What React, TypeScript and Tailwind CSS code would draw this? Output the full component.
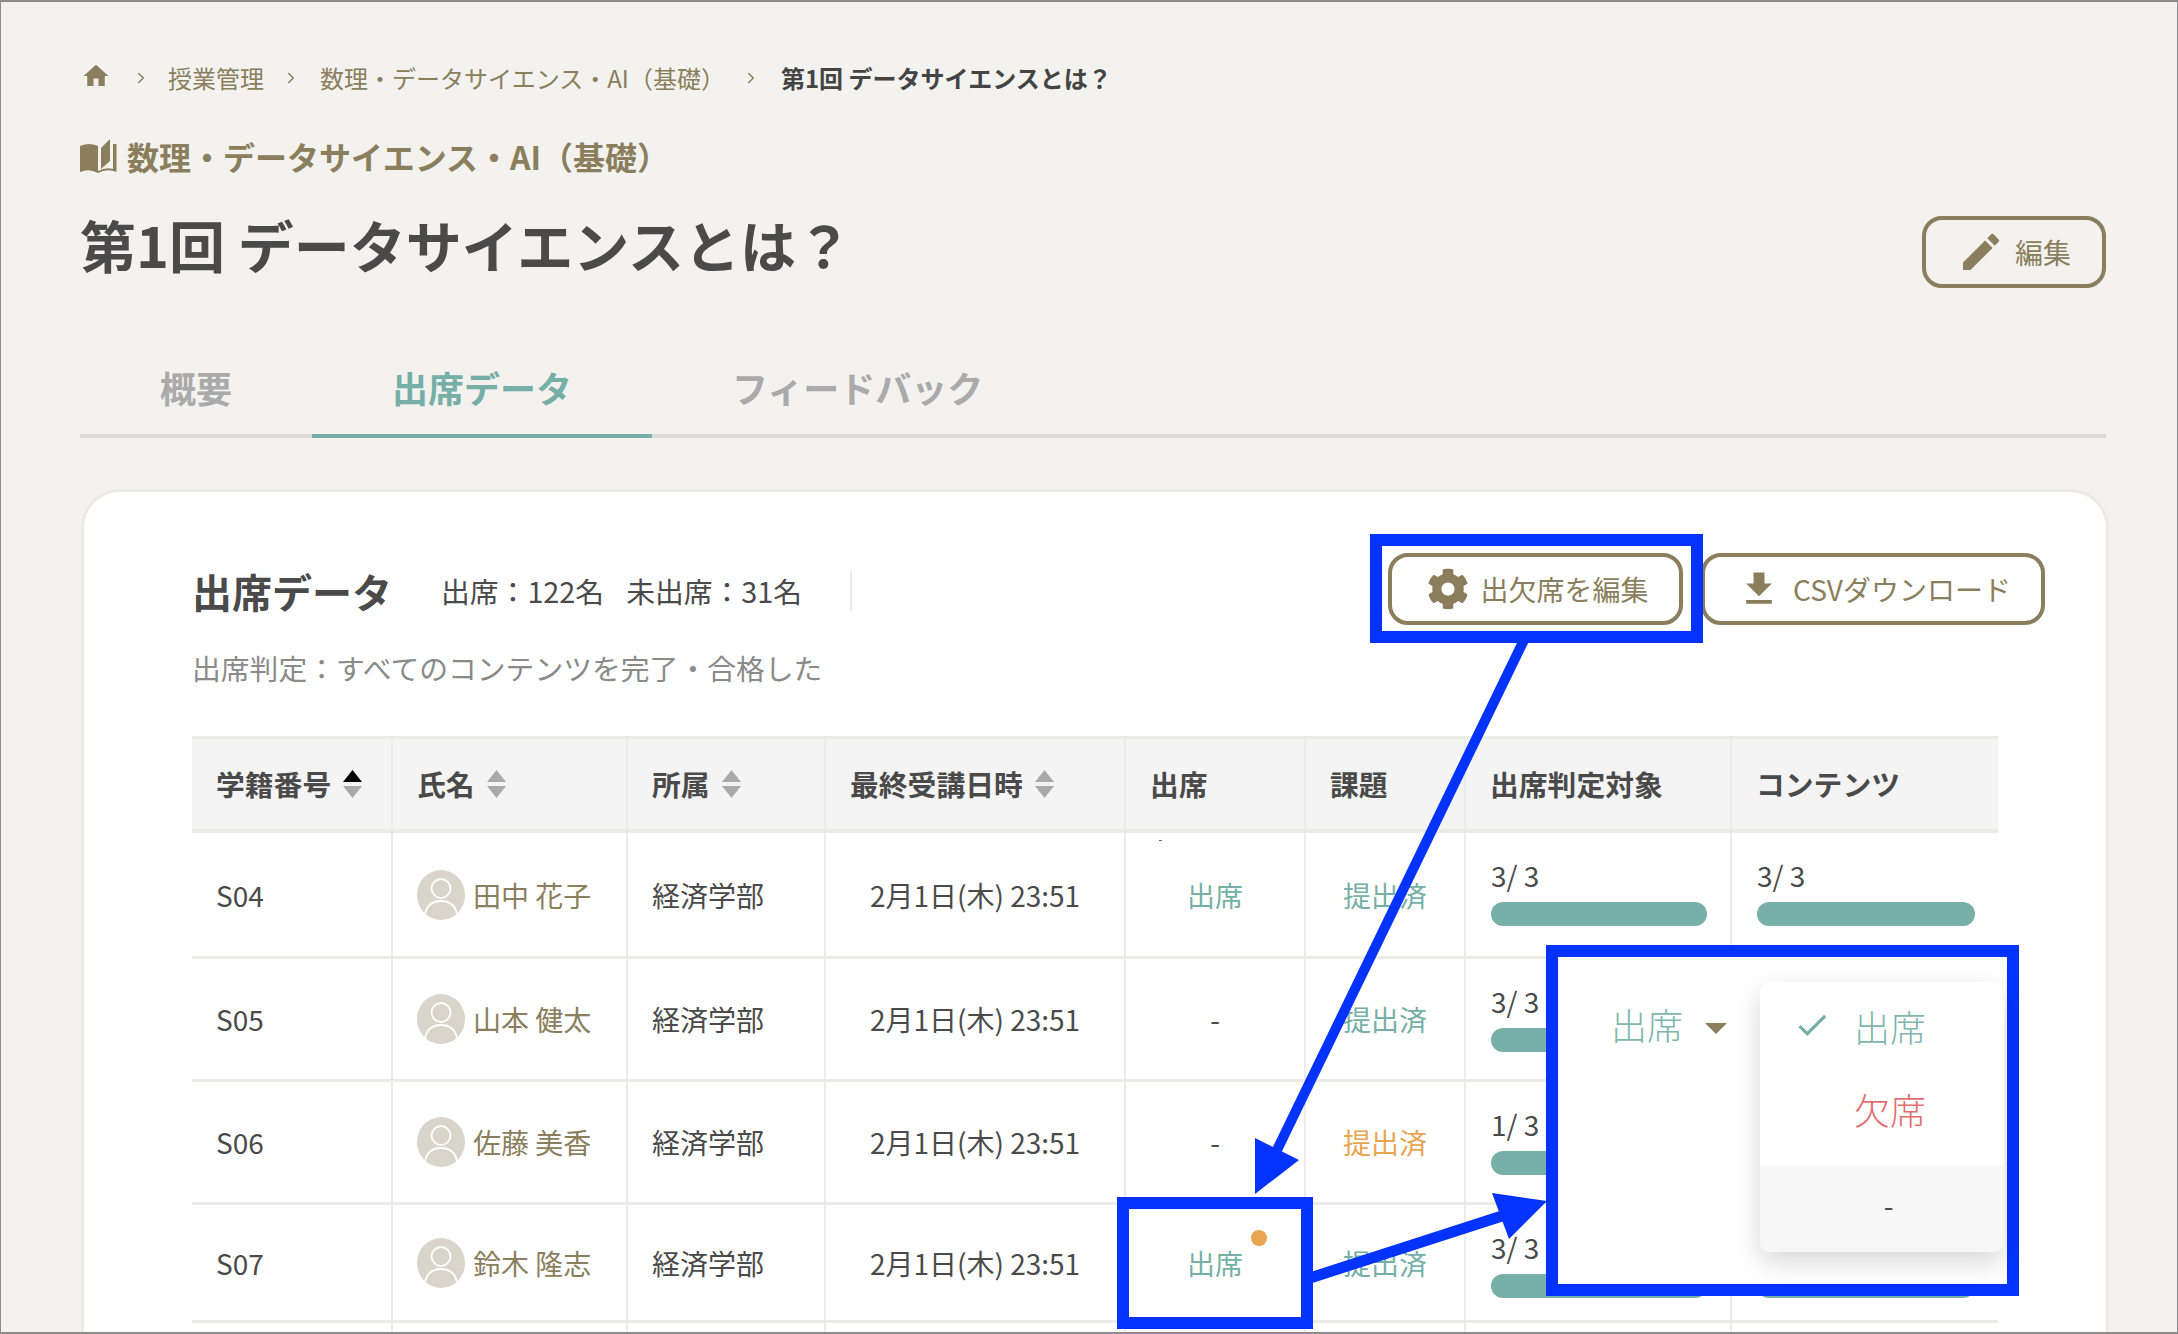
import { MdHome, MdEdit, MdFileDownload, MdCheck } from 'react-icons/md'
import { FaCog } from 'react-icons/fa'
import { LuChevronRight } from 'react-icons/lu'

const rows = [
  { id: 'S04', name: '田中 花子', attend: '出席', submit: 'text-[#76afa8]', target: '3/ 3', content: '3/ 3', h: 'h-[126px]' },
  { id: 'S05', name: '山本 健太', attend: '-', submit: 'text-[#76afa8]', target: '3/ 3', content: '3/ 3', h: 'h-[123px]' },
  { id: 'S06', name: '佐藤 美香', attend: '-', submit: 'text-[#e8a552]', target: '1/ 3', content: '3/ 3', h: 'h-[123px]' },
  { id: 'S07', name: '鈴木 隆志', attend: '出席', submit: 'text-[#76afa8]', target: '3/ 3', content: '3/ 3', h: 'h-[118px]', dot: true },
]

function SortIcon({ active }: { active?: boolean }) {
  return (
    <svg width="19" height="28" viewBox="0 0 19 28" className="shrink-0">
      <polygon points="9.5,0 19,12 0,12" fill={active ? '#000' : '#aaa'} />
      <polygon points="0,16 19,16 9.5,28" fill="#aaa" />
    </svg>
  )
}

function Avatar() {
  return (
    <svg width="48" height="50" viewBox="0 0 48 50" className="shrink-0">
      <ellipse cx="24" cy="25" rx="24" ry="25" fill="#d9d5ca" />
      <circle cx="24" cy="18.5" r="9.5" fill="none" stroke="#fff" strokeWidth="1.8" />
      <path d="M8 44c2-9 8-13 16-13s14 4 16 13" fill="none" stroke="#fff" strokeWidth="1.8" />
    </svg>
  )
}

function BookIcon() {
  return (
    <svg width="37" height="34" viewBox="0 0 37 34" fill="#8a7e5c" className="shrink-0">
      <path d="M0 7Q9 3 18 7V34Q9 29 0 33Z" />
      <path d="M21 9L30 0V22L21 30Z" />
      <path d="M33 5H36.500V33Q27 29 18 34V32Q26 28 33 30Z" />
    </svg>
  )
}

function ActionButton({ icon, label, className }: { icon: React.ReactNode; label: string; className: string }) {
  return (
    <button className={`flex items-center justify-center h-[72px] border-4 border-[#8a7e5c] rounded-[20px] bg-transparent text-[28px] text-[#8a7e5c] ${className}`}>
      {icon}
      <span>{label}</span>
    </button>
  )
}

function Bar({ label }: { label: string }) {
  return (
    <div className="flex flex-col">
      <span className="text-[28px] leading-10 text-[#4a4a4a]">{label}</span>
      <div className="mt-[7px] h-6 rounded-full bg-[#78b0a9]" />
    </div>
  )
}

const th = 'px-[24px] border-r-2 border-[#ebebeb] text-left font-bold'

export default function App() {
  return (
    <div className="relative w-[2178px] h-[1334px] overflow-hidden bg-[#f3f2ef] border-t-2 border-x border-b-2 border-[#8c8c8c] pl-[79px] pr-[71px] pt-[60px] text-[#4a4a4a] font-['Noto_Sans_CJK_JP','Noto_Sans',sans-serif]">
      {/* breadcrumb */}
      <nav className="flex items-center h-8 text-[24px] text-[#8a7e5c]">
        <MdHome className="w-[30px] h-[30px] ml-[1px] -mt-[4px]" />
        <LuChevronRight className="w-[18px] h-[18px] ml-[21px] mr-[20px] text-[#8a7e5c]" />
        <span className="-ml-[2px]">授業管理</span>
        <LuChevronRight className="w-[18px] h-[18px] ml-[18px] mr-[20px]" />
        <span>数理・データサイエンス・AI（基礎）</span>
        <LuChevronRight className="w-[18px] h-[18px] ml-[17px] mr-[20px]" />
        <span className="ml-[1px] font-bold text-[#444]">第1回 データサイエンスとは？</span>
      </nav>

      <div className="flex items-center gap-[10px] h-10 mt-[42px] text-[32px] font-bold text-[#8a7e5c]">
        <BookIcon />
        <span>数理・データサイエンス・AI（基礎）</span>
      </div>

      <div className="flex justify-between h-[72px] mt-[40px]">
        <h1 className="text-[56px] leading-[56px] font-bold text-[#4a4a4a]">第1回 データサイエンスとは？</h1>
        <ActionButton className="w-[184px] gap-[10px]" icon={<MdEdit className="w-[48px] h-[48px]" />} label="編集" />
      </div>

      {/* tabs */}
      <div className="flex mt-[53px] border-b-4 border-[#dcdbd7] text-[36px] font-bold text-[#aaa]">
        <div className="flex items-center h-[97px] -mb-1 pb-[1px] px-20 border-b-4 border-transparent">概要</div>
        <div className="flex items-center h-[97px] -mb-1 pb-[1px] px-20 border-b-4 border-[#76afa8] text-[#76afa8]">出席データ</div>
        <div className="flex items-center h-[97px] -mb-1 pb-[1px] px-20 border-b-4 border-transparent">フィードバック</div>
      </div>

      {/* card */}
      <div className="mt-[54px] ml-[4px] h-[900px] rounded-[36px] bg-white shadow-[0_0_0_3px_#ebeae6] pt-[61px] pl-[108px] pr-[61px]">
        <div className="flex items-center h-[72px]">
          <h2 className="mt-[4px] text-[40px] font-bold leading-none">出席データ</h2>
          <div className="flex items-center h-10 ml-[49px] mt-[4px] pr-[48px] border-r-2 border-[#ebebeb] text-[28.8px]">
            <span>出席：122名</span>
            <span className="ml-[22px]">未出席：31名</span>
          </div>
          <ActionButton className="ml-auto w-[295px] gap-[11px]" icon={<FaCog className="w-[42px] h-[42px] ml-[5px]" />} label="出欠席を編集" />
          <ActionButton className="ml-[18px] w-[344px] gap-[12px]" icon={<MdFileDownload className="w-[44px] h-[44px] ml-[2px]" />} label="CSVダウンロード" />
        </div>
        <p className="mt-[23px] text-[28.8px] leading-10 text-[#8a8a8a]">出席判定：すべてのコンテンツを完了・合格した</p>

        <table className="mt-[48px] w-[1806px] table-fixed border-separate border-spacing-0 text-[28px]">
          <colgroup>
            <col className="w-[201px]" />
            <col className="w-[235px]" />
            <col className="w-[198px]" />
            <col className="w-[300px]" />
            <col className="w-[180px]" />
            <col className="w-[160px]" />
            <col className="w-[266px]" />
            <col className="w-[266px]" />
          </colgroup>
          <thead>
            <tr className="bg-[#f4f4f4] text-[28.8px] [&>th]:h-[97px] [&>th]:border-t-[3px] [&>th]:border-b-4 [&>th]:border-t-[#ebebe8] [&>th]:border-b-[#ebebe8]">
              <th className={th}><span className="flex items-center gap-[12px]">学籍番号<SortIcon active /></span></th>
              <th className={th}><span className="flex items-center gap-[12px]">氏名<SortIcon /></span></th>
              <th className={th}><span className="flex items-center gap-[12px]">所属<SortIcon /></span></th>
              <th className={th}><span className="flex items-center gap-[12px]">最終受講日時<SortIcon /></span></th>
              <th className={th}>出席</th>
              <th className={th}>課題</th>
              <th className={th}>出席判定対象</th>
              <th className="px-[24px] text-left font-bold">コンテンツ</th>
            </tr>
          </thead>
          <tbody>
            {rows.map((r) => (
              <tr key={r.id} className="[&>td]:border-b-[3px] [&>td]:border-b-[#ecebe8]">
                <td className={`${r.h} pl-[24px] border-r-2 border-r-[#ebebeb]`}>{r.id}</td>
                <td className="pl-[24px] border-r-2 border-r-[#ebebeb]">
                  <div className="flex items-center gap-[8px] text-[#8a7e5c] whitespace-nowrap">
                    <Avatar />
                    {r.name}
                  </div>
                </td>
                <td className="pl-[24px] border-r-2 border-r-[#ebebeb]">経済学部</td>
                <td className="text-center border-r-2 border-r-[#ebebeb]">2月1日(木) 23:51</td>
                <td className={`relative text-center border-r-2 border-r-[#ebebeb] ${r.attend === '出席' ? 'text-[#76afa8]' : ''}`}>
                  {r.attend}
                  {r.id === 'S04' && <span className="absolute left-[33px] top-[7px] w-[3px] h-px bg-[#666]" />}
                  {r.dot && <span className="absolute left-[125px] top-[25px] w-4 h-4 rounded-full bg-[#e8a552]" />}
                </td>
                <td className={`text-center border-r-2 border-r-[#ebebeb] ${r.submit}`}>提出済</td>
                <td className="align-top pt-[22px] pl-[25px] pr-[23px] border-r-2 border-r-[#ebebeb]"><Bar label={r.target} /></td>
                <td className="align-top pt-[22px] pl-[25px] pr-[23px]"><Bar label={r.content} /></td>
              </tr>
            ))}
            <tr>
              <td className="h-[60px] border-r-2 border-r-[#ebebeb]" />
              <td className="border-r-2 border-r-[#ebebeb]" />
              <td className="border-r-2 border-r-[#ebebeb]" />
              <td className="border-r-2 border-r-[#ebebeb]" />
              <td className="border-r-2 border-r-[#ebebeb]" />
              <td className="border-r-2 border-r-[#ebebeb]" />
              <td className="border-r-2 border-r-[#ebebeb]" />
              <td />
            </tr>
          </tbody>
        </table>
      </div>

      {/* annotations */}
      <svg className="absolute -left-px -top-[2px] w-[2178px] h-[1334px] pointer-events-none" viewBox="0 0 2178 1334">
        <line x1="1524" y1="640" x2="1277" y2="1150" stroke="#0433ff" strokeWidth="10" />
        <polygon points="1255,1194 1255,1138 1299,1160" fill="#0433ff" />
        <line x1="1310" y1="1278" x2="1502" y2="1216" stroke="#0433ff" strokeWidth="11" />
        <polygon points="1547,1201 1492,1193 1509,1239" fill="#0433ff" />
      </svg>
      <div className="absolute left-[1369px] top-[532px] w-[333px] h-[109px] border-[12px] border-[#0433ff]" />
      <div className="absolute left-[1116px] top-[1195px] w-[196px] h-[132px] border-[12px] border-[#0433ff]" />

      <div className="absolute left-[1545px] top-[943px] w-[473px] h-[351px] border-[12px] border-[#0433ff] bg-white">
        <div className="absolute left-[53px] top-[43px] flex items-center gap-[22px] text-[36px] leading-[48px] font-light text-[#7fb6ae]">
          出席
          <span className="mt-[8px] w-0 h-0 border-x-[11px] border-t-[11px] border-x-transparent border-t-[#8a7e5c]" />
        </div>
        <div className="absolute left-[202px] top-[25px] w-[244px] h-[270px] overflow-hidden rounded-[10px] bg-white shadow-[0_10px_28px_rgba(0,0,0,0.16)] text-[36px] font-light">
          <div className="flex items-center h-[184px] relative">
            <MdCheck className="absolute left-[33px] top-[24px] w-[38px] h-[38px] text-[#76afa8]" />
            <span className="absolute left-[94px] top-[20px] leading-[48px] text-[#7fb6ae]">出席</span>
            <span className="absolute left-[94px] top-[103px] leading-[48px] text-[#e07070]">欠席</span>
          </div>
          <div className="flex items-center justify-center h-[86px] pl-[13px] pb-[9px] bg-[#f7f7f7] text-[28px] text-[#4a4a4a] font-normal">-</div>
        </div>
      </div>
    </div>
  )
}
